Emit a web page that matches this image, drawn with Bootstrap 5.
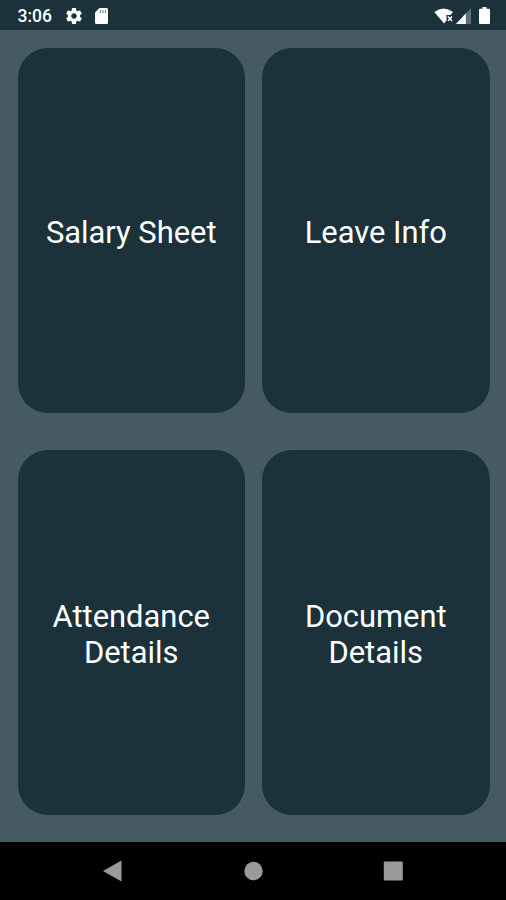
<!DOCTYPE html>
<html lang="en">
<head>
<meta charset="utf-8">
<meta name="viewport" content="width=device-width, initial-scale=1">
<title>Employee Menu</title>
<link rel="stylesheet" href="https://cdn.jsdelivr.net/npm/bootstrap@5.3.0/dist/css/bootstrap.min.css">
<style>
body { font-family: Roboto, sans-serif; background: #465a63; overflow: hidden; }
.status-bar { height: 30px; flex: none; background: #1c323b; font-size: 17.5px; font-weight: 500; padding: 1px 16px 0 17.5px; line-height: 30px; }
.status-bar svg, .nav-keys svg { display: block; flex: none; }
.gear { margin-left: 14px; }
.sd { margin-left: 13px; }
.signal { margin-left: 2px; }
.battery { margin-left: 8px; }
.menu-grid { padding: 18.4px 16.5px 0 17.5px; }
.menu-grid .row { --bs-gutter-x: 17px; row-gap: 37px; }
.tile { height: 365px; border-radius: 30px; background: #1c323b; font-size: 30.9px; line-height: 36px; padding-top: 4px; }
.nav-keys { height: 58px; flex: none; background: #000; }
</style>
</head>
<body class="vh-100 d-flex flex-column">
<header class="status-bar d-flex align-items-center justify-content-between text-white">
  <div class="d-flex align-items-center">
    <span>3:06</span>
    <svg class="gear" width="16" height="16" viewBox="2 2 20 20" fill="#fff"><path d="M19.43 12.98c.04-.32.07-.64.07-.98s-.03-.66-.07-.98l2.11-1.65c.19-.15.24-.42.12-.64l-2-3.46c-.12-.22-.39-.3-.61-.22l-2.49 1c-.52-.4-1.08-.73-1.69-.98l-.38-2.65C14.46 2.18 14.25 2 14 2h-4c-.25 0-.46.18-.49.42l-.38 2.65c-.61.25-1.17.59-1.69.98l-2.49-1c-.23-.09-.49 0-.61.22l-2 3.46c-.13.22-.07.49.12.64l2.11 1.65c-.04.32-.07.65-.07.98s.03.66.07.98l-2.11 1.65c-.19.15-.24.42-.12.64l2 3.46c.12.22.39.3.61.22l2.49-1c.52.4 1.08.73 1.69.98l.38 2.65c.03.24.24.42.49.42h4c.25 0 .46-.18.49-.42l.38-2.65c.61-.25 1.17-.59 1.69-.98l2.49 1c.23.09.49 0 .61-.22l2-3.46c.12-.22.07-.49-.12-.64l-2.11-1.65zM12 15.5c-1.93 0-3.5-1.57-3.5-3.5s1.57-3.5 3.5-3.5 3.5 1.57 3.5 3.5-1.57 3.5-3.5 3.5z"/></svg>
    <svg class="sd" width="13" height="16" viewBox="0 0 13 16"><path fill="#fff" d="M4.5 0H11.5Q13 0 13 1.5V14.5Q13 16 11.5 16H1.5Q0 16 0 14.5V4.5Z"/><path stroke="#1c323b" stroke-opacity=".55" stroke-width="1.2" d="M5.5 2v3M8 2v3M10.5 2v3"/></svg>
  </div>
  <div class="d-flex align-items-center">
    <svg width="20" height="16" viewBox="0 0 20 16"><path fill="#fff" d="M.3 4Q9.500-3 19 4L16.500 7H12.500V12.500L10 15.500Z"/><path fill="none" stroke="#fff" stroke-width="1.5" d="M14 8.500l4 4.500M18 8.500l-4 4.500"/></svg>
    <svg class="signal" width="15" height="16" viewBox="0 0 15 16"><path fill="#fff" fill-opacity=".3" d="M15 0V16H0Z"/><path fill="#fff" d="M9.800 5.600V16H0Z"/></svg>
    <svg class="battery" width="11" height="17" viewBox="0 0 11 17"><path fill="#fff" d="M3.500 0h4v1.700H10Q11 1.700 11 2.700V16Q11 17 10 17H1Q0 17 0 16V2.700Q0 1.700 1 1.700H3.500Z"/></svg>
  </div>
</header>
<main class="menu-grid flex-grow-1">
  <div class="row row-cols-2">
    <div class="col"><div class="tile d-flex align-items-center justify-content-center text-center text-white">Salary Sheet</div></div>
    <div class="col"><div class="tile d-flex align-items-center justify-content-center text-center text-white">Leave Info</div></div>
    <div class="col"><div class="tile d-flex align-items-center justify-content-center text-center text-white">Attendance<br>Details</div></div>
    <div class="col"><div class="tile d-flex align-items-center justify-content-center text-center text-white">Document<br>Details</div></div>
  </div>
</main>
<footer class="nav-keys">
  <svg width="506" height="58" viewBox="0 0 506 58" fill="#9b9b9b"><path d="M121.500 18.500V39.500L103 29Z"/><circle cx="253.500" cy="29" r="9.200"/><rect x="383.800" y="19.500" width="19" height="19" rx="1"/></svg>
</footer>
<script src="https://cdn.jsdelivr.net/npm/bootstrap@5.3.0/dist/js/bootstrap.bundle.min.js"></script>
</body>
</html>
